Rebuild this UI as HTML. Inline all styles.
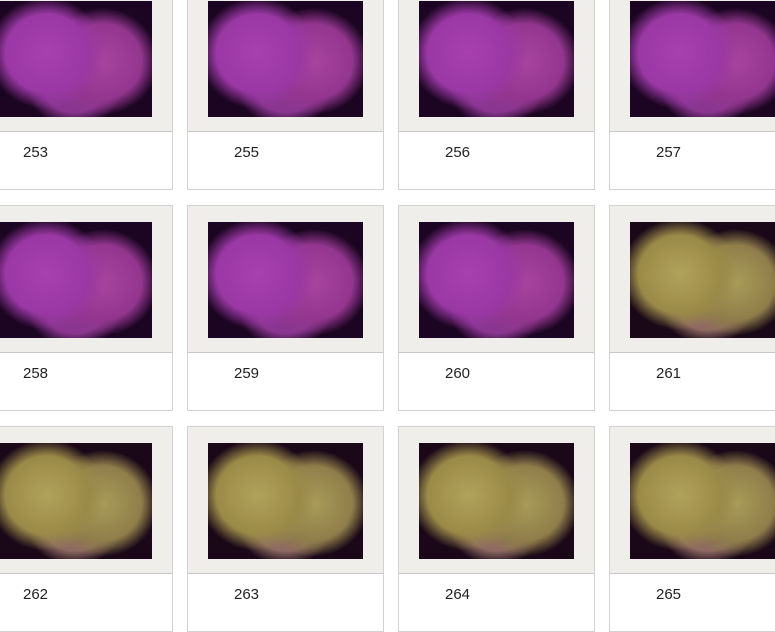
<!DOCTYPE html>
<html><head><style>
body{margin:0;width:775px;height:625px;overflow:hidden;background:#fff;font-family:"Liberation Sans",sans-serif;position:relative}
.c{position:absolute;width:195px;height:204px;border:1px solid #d2d2d2;background:#fff}
.f{position:absolute;left:0;top:0;width:195px;height:146px;background:#efeeea;border-bottom:1px solid #c8c8c8}
.i{position:absolute;left:20px;top:16px;width:155px;height:116px;background:#1a0520}
.t{position:absolute;left:46px;top:159px;font-size:15px;color:#222}
.p{background:radial-gradient(ellipse 38% 48% at 32% 45%,#a840b0 0,#9a38a4 70%,transparent 100%),radial-gradient(ellipse 36% 46% at 68% 52%,#a8449e 0,#93368f 70%,transparent 100%),radial-gradient(ellipse 30% 30% at 50% 78%,#8a3690 0,#8a3690 60%,transparent 100%),#1c0522}
.y{background:radial-gradient(ellipse 38% 48% at 32% 45%,#b0a25a 0,#9a8a48 70%,transparent 100%),radial-gradient(ellipse 36% 46% at 68% 52%,#a89c58 0,#8f7e4a 70%,transparent 100%),radial-gradient(ellipse 30% 30% at 50% 75%,#8e6a62 0,#8e6a62 60%,transparent 100%),#1a0818}
</style></head><body>
<div class="c" style="left:-24px;top:-16px"><div class="f"><div class="i p"></div></div><div class="t">253</div></div>
<div class="c" style="left:187px;top:-16px"><div class="f"><div class="i p"></div></div><div class="t">255</div></div>
<div class="c" style="left:398px;top:-16px"><div class="f"><div class="i p"></div></div><div class="t">256</div></div>
<div class="c" style="left:609px;top:-16px"><div class="f"><div class="i p"></div></div><div class="t">257</div></div>
<div class="c" style="left:-24px;top:205px"><div class="f"><div class="i p"></div></div><div class="t">258</div></div>
<div class="c" style="left:187px;top:205px"><div class="f"><div class="i p"></div></div><div class="t">259</div></div>
<div class="c" style="left:398px;top:205px"><div class="f"><div class="i p"></div></div><div class="t">260</div></div>
<div class="c" style="left:609px;top:205px"><div class="f"><div class="i y"></div></div><div class="t">261</div></div>
<div class="c" style="left:-24px;top:426px"><div class="f"><div class="i y"></div></div><div class="t">262</div></div>
<div class="c" style="left:187px;top:426px"><div class="f"><div class="i y"></div></div><div class="t">263</div></div>
<div class="c" style="left:398px;top:426px"><div class="f"><div class="i y"></div></div><div class="t">264</div></div>
<div class="c" style="left:609px;top:426px"><div class="f"><div class="i y"></div></div><div class="t">265</div></div>
</body></html>
